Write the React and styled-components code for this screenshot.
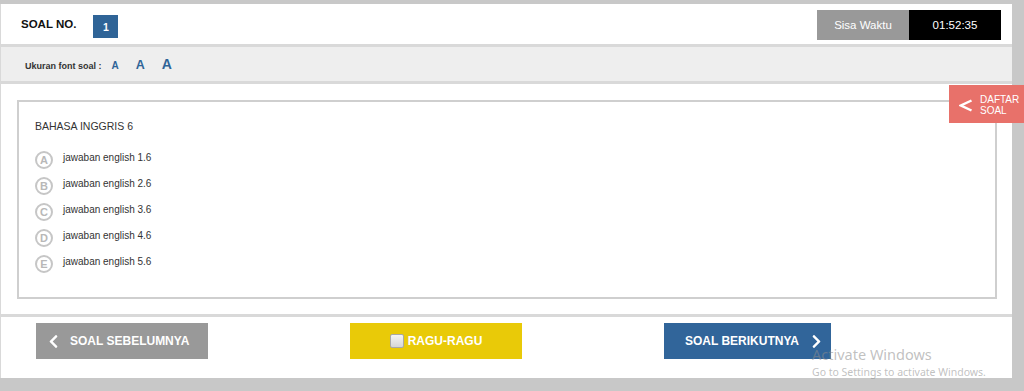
import React from 'react';
import styled, { createGlobalStyle } from 'styled-components';
import { FaChevronLeft, FaChevronRight } from 'react-icons/fa';

const Global = createGlobalStyle`
  html, body {
    margin: 0;
    padding: 0;
    height: 391px;
    overflow: hidden;
    background: #c8c8c8;
    font-family: "Liberation Sans", Arial, sans-serif;
  }
  * { box-sizing: border-box; }
`;

const Page = styled.div`
  position: relative;
  width: 1024px;
  height: 391px;
  padding-top: 4px;
`;

const Shell = styled.div`
  width: 1012px;
  background: #d9d9d9;
  padding-left: 1px;
  display: flex;
  flex-direction: column;
  gap: 3px;
`;

const Header = styled.header`
  height: 40px;
  background: #fff;
  display: flex;
  align-items: center;
  padding: 0 11px 0 20px;
`;

const HeaderTitle = styled.div`
  font-size: 11.5px;
  font-weight: bold;
  color: #111;
`;

const NumberBox = styled.div`
  width: 25px;
  height: 23px;
  margin-left: 17px;
  margin-top: 5px;
  background: #2f6497;
  color: #fff;
  font-weight: bold;
  font-size: 10.5px;
  display: flex;
  align-items: center;
  justify-content: center;
`;

const Timer = styled.div`
  margin-left: auto;
  margin-top: 2px;
  display: flex;
`;

const TimerCell = styled.div`
  width: 92px;
  height: 30px;
  background: ${p => (p.$dark ? '#000' : '#999')};
  color: #fff;
  font-size: 11.5px;
  display: flex;
  align-items: center;
  justify-content: center;
`;

const FontBar = styled.div`
  height: 34px;
  background: #eee;
  display: flex;
  align-items: baseline;
  padding: 9px 0 0 24px;
`;

const FontLabel = styled.span`
  font-size: 9px;
  font-weight: bold;
  color: #333;
  margin-right: 10px;
`;

const SizeOption = styled.span`
  font-size: ${p => p.$size}px;
  font-weight: bold;
  color: #2f6497;
  margin-right: 17px;
  cursor: pointer;
`;

const Content = styled.main`
  height: 230px;
  background: #fff;
  padding: 16px 15px 15px 16px;
`;

const QuestionBox = styled.div`
  height: 100%;
  border: 2px solid #cfcfcf;
  padding: 17px 16px 0 16px;
`;

const QuestionTitle = styled.div`
  font-size: 10.5px;
  line-height: 14px;
  color: #333;
  margin-bottom: 12px;
`;

const OptionRow = styled.div`
  display: flex;
  align-items: flex-start;
  height: 26px;
`;

const OptionCircle = styled.span`
  width: 18px;
  height: 18px;
  margin-top: 6px;
  border: 2px solid #c6c6c6;
  border-radius: 50%;
  color: #b8b8b8;
  font-size: 11px;
  font-weight: bold;
  display: flex;
  align-items: center;
  justify-content: center;
  flex-shrink: 0;
`;

const OptionText = styled.span`
  margin-left: 10px;
  font-size: 10px;
  line-height: 26px;
  color: #333;
`;

const Footer = styled.footer`
  height: 61px;
  background: #fff;
  display: flex;
  align-items: flex-start;
  gap: 142px;
  padding: 6px 0 0 35px;
`;

const NavButton = styled.button`
  width: ${p => p.$w}px;
  height: 36px;
  border: none;
  margin: 0;
  padding: 0;
  background: ${p => p.$bg};
  color: #fff;
  font-family: "Liberation Sans", Arial, sans-serif;
  font-size: 12px;
  font-weight: bold;
  display: flex;
  align-items: center;
  justify-content: ${p => p.$justify || 'center'};
  padding-left: ${p => p.$pl || 0}px;
  gap: ${p => p.$gap || 0}px;
  cursor: pointer;
`;

const CheckBox = styled.span`
  width: 14px;
  height: 14px;
  border: 1px solid #a8a8a8;
  border-radius: 2px;
  background: linear-gradient(#f4f4f4, #d6d6d6);
  margin-right: 4px;
`;

const ListTab = styled.div`
  position: absolute;
  top: 85px;
  right: 0;
  width: 75px;
  height: 38px;
  background: #e8716a;
  color: #fff;
  display: flex;
  align-items: center;
  padding: 2px 0 0 10px;
  gap: 7px;
`;

const TabText = styled.div`
  font-size: 10px;
  line-height: 11.5px;
`;

const Watermark = styled.div`
  position: absolute;
  left: 812px;
  top: 344px;
  color: rgba(140, 140, 140, 0.55);
  font-family: "Noto Sans", "Open Sans", sans-serif;
  pointer-events: none;
`;

const WatermarkTitle = styled.div`
  font-size: 14.5px;
  line-height: 20px;
`;

const WatermarkSub = styled.div`
  font-size: 10.5px;
  line-height: 14px;
  margin-top: 1px;
`;

const options = [
  ['A', 'jawaban english 1.6'],
  ['B', 'jawaban english 2.6'],
  ['C', 'jawaban english 3.6'],
  ['D', 'jawaban english 4.6'],
  ['E', 'jawaban english 5.6'],
];

export default function App() {
  return (
    <Page>
      <Global />
      <Shell>
        <Header>
          <HeaderTitle>SOAL NO.</HeaderTitle>
          <NumberBox>1</NumberBox>
          <Timer>
            <TimerCell>Sisa Waktu</TimerCell>
            <TimerCell $dark>01:52:35</TimerCell>
          </Timer>
        </Header>
        <FontBar>
          <FontLabel>Ukuran font soal :</FontLabel>
          <SizeOption $size={10}>A</SizeOption>
          <SizeOption $size={12.5}>A</SizeOption>
          <SizeOption $size={14}>A</SizeOption>
        </FontBar>
        <Content>
          <QuestionBox>
            <QuestionTitle>BAHASA INGGRIS 6</QuestionTitle>
            {options.map(([l, t]) => (
              <OptionRow key={l}>
                <OptionCircle>{l}</OptionCircle>
                <OptionText>{t}</OptionText>
              </OptionRow>
            ))}
          </QuestionBox>
        </Content>
        <Footer>
          <NavButton $w={172} $bg="#999" $justify="flex-start" $pl={10} $gap={9}>
            <FaChevronLeft size={15} />
            SOAL SEBELUMNYA
          </NavButton>
          <NavButton $w={172} $bg="#e9ca08">
            <CheckBox />
            RAGU-RAGU
          </NavButton>
          <NavButton $w={167} $bg="#31659a" $justify="flex-start" $pl={21} $gap={10}>
            SOAL BERIKUTNYA
            <FaChevronRight size={15} />
          </NavButton>
        </Footer>
      </Shell>
      <ListTab>
        <svg width="14" height="13" viewBox="0 0 14 13">
          <polyline points="12.5,1.5 2,6.5 12.5,11.5" fill="none" stroke="#fff" strokeWidth="2.4" />
        </svg>
        <TabText>
          DAFTAR
          <br />
          SOAL
        </TabText>
      </ListTab>
      <Watermark>
        <WatermarkTitle>Activate Windows</WatermarkTitle>
        <WatermarkSub>Go to Settings to activate Windows.</WatermarkSub>
      </Watermark>
    </Page>
  );
}
